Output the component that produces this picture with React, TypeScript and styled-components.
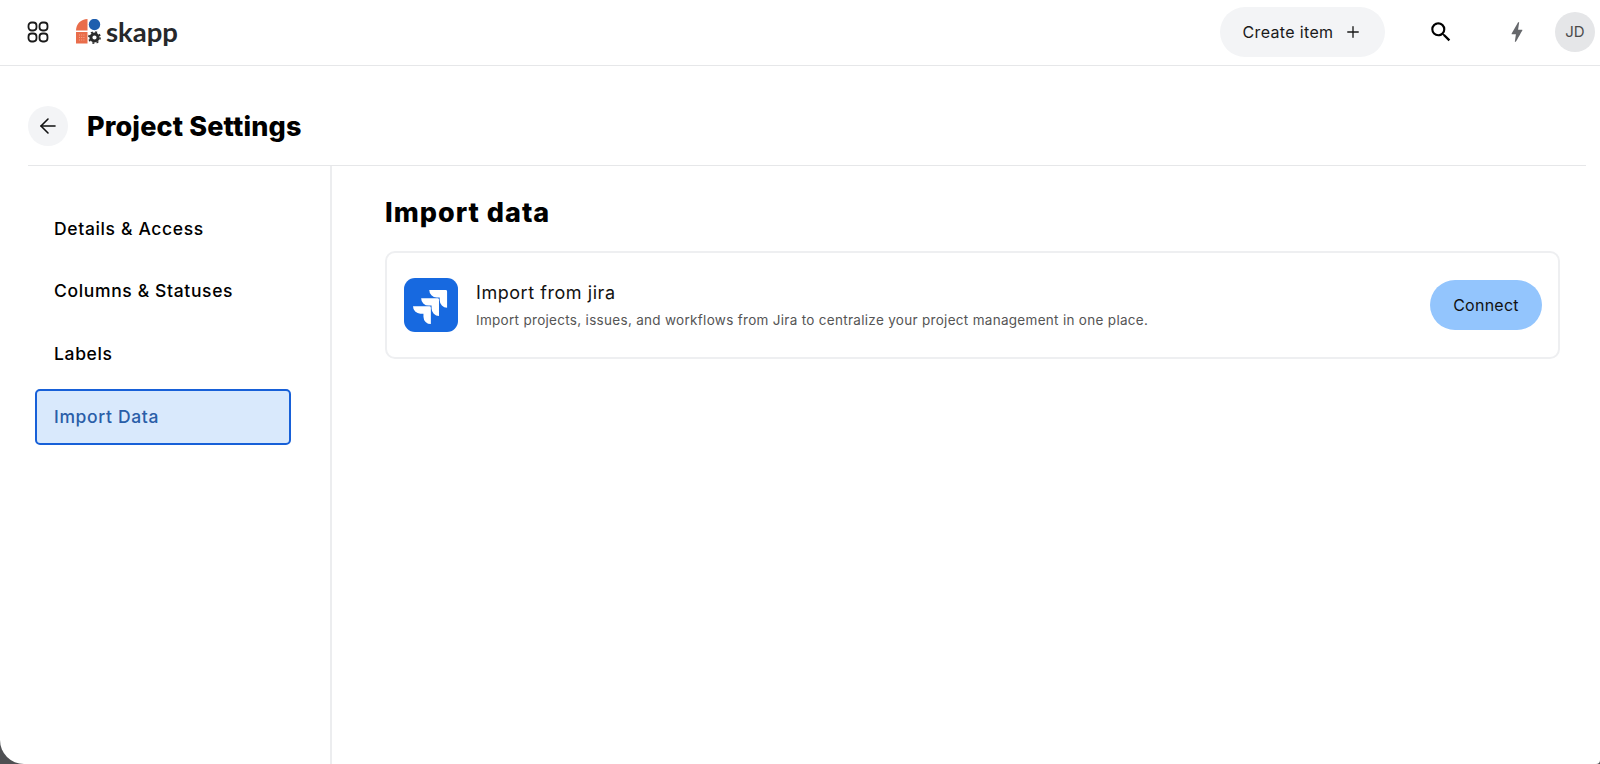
import React from 'react';
import styled, {createGlobalStyle} from 'styled-components';
import {ArrowLeft, Plus} from 'lucide-react';
import {MdBolt, MdSearch} from 'react-icons/md';

const GlobalStyle = createGlobalStyle`
  html, body {
    margin: 0;
    padding: 0;
    height: 100%;
    background: #4f5053;
  }
  #root {
    height: 100%;
  }
  * {
    box-sizing: border-box;
  }
`;

const navItems = ['Details & Access', 'Columns & Statuses', 'Labels', 'Import Data'];

const Logo: React.FC = () => (
  <LogoWrapper>
    <svg width="30" height="26" viewBox="0 0 30 26">
      <path d="M0 11.5C0 5 5 0 11.5 0V11.5Z" fill="#e96d4b" />
      <rect x="0" y="13" width="11.5" height="11.5" fill="#e96d4b" />
      <path d="M3 16h5.5M3 18.5h5.5M3 21h5.5" stroke="#f3a78f" strokeWidth="1" strokeDasharray="1 1.2" />
      <circle cx="18.5" cy="5.5" r="5.7" fill="#1f5fae" />
      <circle cx="18.5" cy="18.5" r="3.6" fill="none" stroke="#2b2b2b" strokeWidth="3" />
      <circle cx="18.5" cy="18.5" r="5.6" fill="none" stroke="#2b2b2b" strokeWidth="1.6" strokeDasharray="2 2.4" />
    </svg>
    <LogoText>skapp</LogoText>
  </LogoWrapper>
);

const GridIcon: React.FC = () => (
  <svg width="24" height="24" viewBox="0 0 24 24" fill="none" stroke="#1a1a1a" strokeWidth="1.8">
    <rect x="2.5" y="2.5" width="8" height="8" rx="3.2" />
    <rect x="13.5" y="2.5" width="8" height="8" rx="3.2" />
    <rect x="2.5" y="13.5" width="8" height="8" rx="3.2" />
    <rect x="13.5" y="13.5" width="8" height="8" rx="3.2" />
  </svg>
);

const JiraIcon: React.FC = () => (
  <svg width="54" height="54" viewBox="0 0 54 54">
    <rect width="54" height="54" rx="11" fill="#1769e0" />
    <g transform="translate(9 12) scale(1.42)">
      <path
        fill="#ffffff"
        d="M11.571 11.513H0a5.218 5.218 0 0 0 5.232 5.215h2.13v2.057A5.215 5.215 0 0 0 12.575 24V12.518a1.005 1.005 0 0 0-1.005-1.005zm5.723-5.756H5.736a5.215 5.215 0 0 0 5.215 5.214h2.129v2.058a5.218 5.218 0 0 0 5.215 5.214V6.758a1.001 1.001 0 0 0-1.001-1.001zM23.013 0H11.455a5.215 5.215 0 0 0 5.215 5.215h2.129v2.057A5.215 5.215 0 0 0 24 12.483V1.005A1.001 1.001 0 0 0 23.013 0Z"
      />
    </g>
  </svg>
);

const App: React.FC = () => {
  return (
    <Page>
      <GlobalStyle />
      <TopBar>
        <Brand>
          <GridIcon />
          <Logo />
        </Brand>
        <Actions>
          <CreateButton>
            Create item
            <Plus size={18} strokeWidth={1.8} />
          </CreateButton>
          <SearchButton>
            <MdSearch size={26} />
          </SearchButton>
          <BoltButton>
            <MdBolt size={26} />
          </BoltButton>
          <Avatar>JD</Avatar>
        </Actions>
      </TopBar>
      <Content>
        <TitleRow>
          <BackButton>
            <ArrowLeft size={24} strokeWidth={1.6} />
          </BackButton>
          <PageTitle>Project Settings</PageTitle>
        </TitleRow>
        <Columns>
          <SideNav>
            {navItems.map(item => (
              <NavItem key={item} $active={item === 'Import Data'}>
                {item}
              </NavItem>
            ))}
          </SideNav>
          <Main>
            <SectionTitle>Import data</SectionTitle>
            <Card>
              <JiraIcon />
              <CardBody>
                <CardTitle>Import from jira</CardTitle>
                <CardText>
                  Import projects, issues, and workflows from Jira to centralize your project
                  management in one place.
                </CardText>
              </CardBody>
              <ConnectButton>Connect</ConnectButton>
            </Card>
          </Main>
        </Columns>
      </Content>
    </Page>
  );
};

const fontStack = `Inter, "Noto Sans", sans-serif`;

const Page = styled.div`
  height: 764px;
  display: flex;
  flex-direction: column;
  background: #ffffff;
  border-bottom-left-radius: 24px;
  border-bottom-right-radius: 4px;
  font-family: ${fontStack};
  color: #000000;
  overflow: hidden;
`;

const TopBar = styled.header`
  height: 66px;
  flex: none;
  display: flex;
  align-items: center;
  justify-content: space-between;
  padding: 0 5px 2px 26px;
  border-bottom: 1px solid #e6e7e9;
`;

const Brand = styled.div`
  display: flex;
  align-items: center;
  gap: 26px;
`;

const LogoWrapper = styled.div`
  display: flex;
  align-items: center;
`;

const LogoText = styled.span`
  font-family: Lato, sans-serif;
  font-size: 27.5px;
  font-weight: 700;
  color: #26282b;
  line-height: 1;
`;

const Actions = styled.div`
  display: flex;
  align-items: center;
`;

const CreateButton = styled.button`
  width: 165px;
  height: 50px;
  display: flex;
  align-items: center;
  justify-content: center;
  gap: 11px;
  border: none;
  border-radius: 25px;
  background: #f3f4f6;
  font-family: ${fontStack};
  font-size: 16px;
  letter-spacing: 0.35px;
  color: #1a1a1a;
`;

const SearchButton = styled.div`
  display: flex;
  margin-left: 43px;
  color: #000000;
`;

const BoltButton = styled.div`
  display: flex;
  margin-left: 50px;
  color: #66686c;
`;

const Avatar = styled.div`
  width: 40px;
  height: 40px;
  margin-left: 25px;
  display: flex;
  align-items: center;
  justify-content: center;
  border-radius: 50%;
  background: #e5e6e8;
  font-size: 15px;
  color: #4b4b4b;
`;

const Content = styled.div`
  flex: 1;
  min-height: 0;
  display: flex;
  flex-direction: column;
  padding: 0 14px 0 28px;
`;

const TitleRow = styled.div`
  height: 100px;
  flex: none;
  display: flex;
  align-items: center;
  gap: 19px;
  padding-top: 21px;
  border-bottom: 1px solid #e6e7e9;
`;

const BackButton = styled.div`
  width: 40px;
  height: 40px;
  display: flex;
  align-items: center;
  justify-content: center;
  border-radius: 50%;
  background: #f3f4f6;
  color: #111111;
`;

const PageTitle = styled.h1`
  margin: 0;
  font-size: 27px;
  font-weight: 800;
  letter-spacing: 0.15px;
`;

const Columns = styled.div`
  flex: 1;
  min-height: 0;
  display: flex;
`;

const SideNav = styled.nav`
  width: 304px;
  flex: none;
  display: flex;
  flex-direction: column;
  gap: 6.7px;
  padding: 35px 0 0 7px;
  border-right: 2px solid #ecedef;
`;

const NavItem = styled.div<{$active?: boolean}>`
  width: 256px;
  height: 56px;
  flex: none;
  display: flex;
  align-items: center;
  padding: 0 0 2px 17px;
  border-radius: 5px;
  border: 2px solid ${p => (p.$active ? '#1760d8' : 'transparent')};
  background: ${p => (p.$active ? '#d9e9fc' : 'transparent')};
  font-size: 17.5px;
  font-weight: 500;
  letter-spacing: 0.65px;
  color: ${p => (p.$active ? '#2a5ea8' : '#000000')};
`;

const Main = styled.main`
  flex: 1;
  min-width: 0;
  padding: 29px 26px 0 53px;
`;

const SectionTitle = styled.h2`
  margin: 0 0 20px;
  font-size: 27px;
  font-weight: 800;
  letter-spacing: 1px;
  line-height: 36px;
`;

const Card = styled.div`
  height: 108px;
  display: flex;
  align-items: center;
  gap: 18px;
  padding: 0 16px 0 17px;
  border: 2px solid #eeeff1;
  border-radius: 10px;
`;

const CardBody = styled.div`
  flex: 1;
  min-width: 0;
  display: flex;
  flex-direction: column;
  gap: 9px;
`;

const CardTitle = styled.div`
  font-size: 18px;
  font-weight: 400;
  letter-spacing: 0.55px;
  color: #111111;
`;

const CardText = styled.div`
  font-size: 13.5px;
  letter-spacing: 0.3px;
  color: #555555;
`;

const ConnectButton = styled.button`
  width: 112px;
  height: 50px;
  flex: none;
  border: none;
  border-radius: 25px;
  background: #93c5fd;
  font-family: ${fontStack};
  font-size: 16px;
  letter-spacing: 0.25px;
  color: #111111;
`;

export default App;
